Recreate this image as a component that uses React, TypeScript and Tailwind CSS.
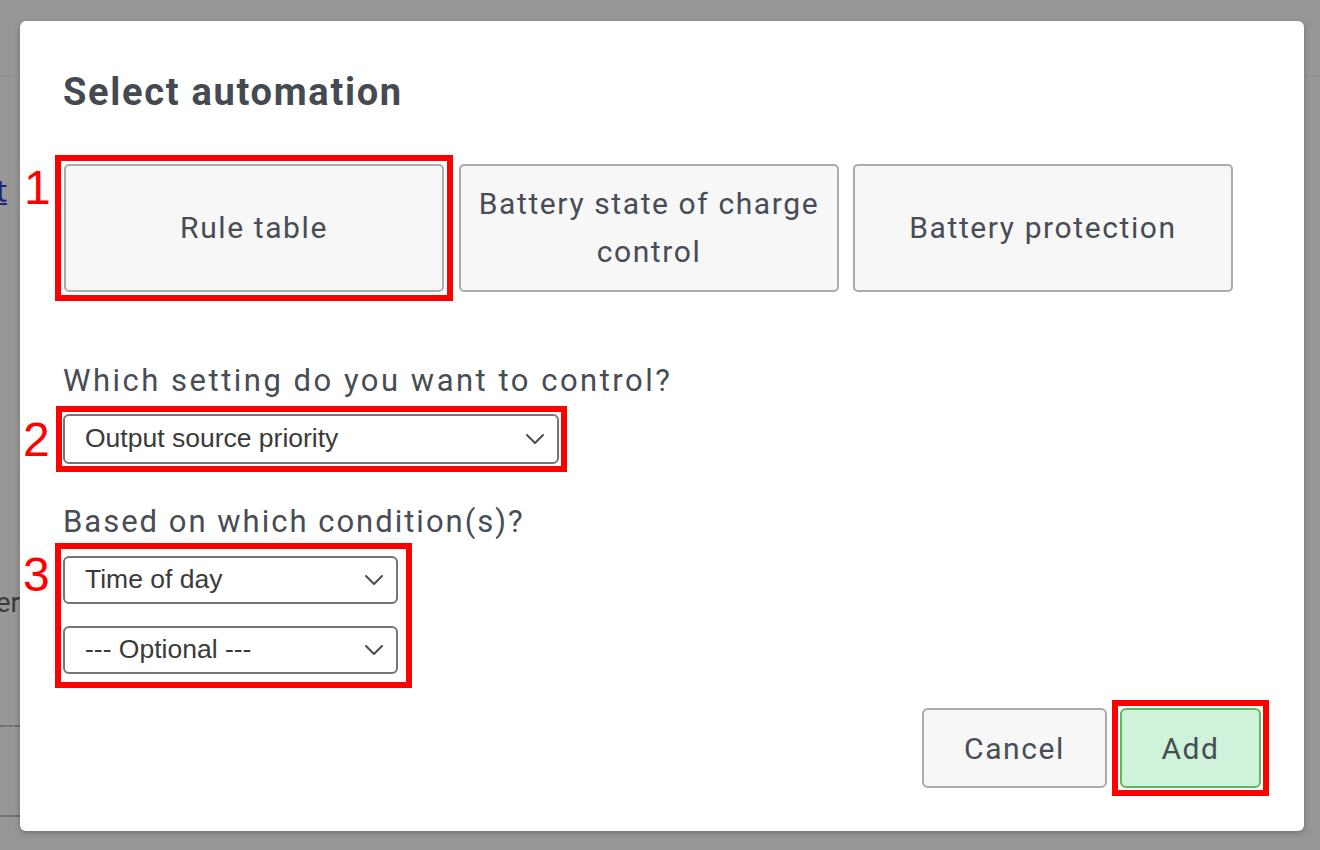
import React from "react";

const textFont = { fontFamily: "Roboto, 'Noto Sans', sans-serif" };

function Chevron() {
  return (
    <svg width="20" height="12" viewBox="0 0 20 12" fill="none" className="shrink-0">
      <path d="M2 2 L10 10 L18 2" stroke="#4a4d52" strokeWidth="2" strokeLinecap="round" strokeLinejoin="round" />
    </svg>
  );
}

function FakeSelect({ label, width, height }: { label: string; width: string; height: string }) {
  return (
    <div
      className={`flex items-center justify-between rounded-[6px] border-2 border-[#767676] bg-white pl-[20px] pr-[12px] text-[26.5px] text-[#3a3a3a] ${width} ${height}`}
      style={{ fontFamily: "'Liberation Sans', Arial, sans-serif" }}
    >
      <span>{label}</span>
      <Chevron />
    </div>
  );
}

function Marker({ n, className }: { n: string; className: string }) {
  return (
    <span
      className={`absolute text-[48px] leading-none text-[#ff0000] ${className}`}
      style={{ fontFamily: "'Liberation Sans', Arial, sans-serif" }}
    >
      {n}
    </span>
  );
}

const boxCls =
  "flex h-[128px] w-[380px] shrink-0 items-center justify-center rounded-[5px] border-2 border-[#ababab] bg-[#f7f7f7] px-[16px] text-center text-[30px] leading-[48px] tracking-[1.6px]";

export default function App() {
  return (
    <div className="relative h-[850px] w-[1320px] overflow-hidden bg-[#979797]">
      {/* page behind the overlay */}
      <div className="flex h-full flex-col">
        <div className="h-[76px] border-b border-[#8e8e8e]" />
        <div className="flex w-[20px] flex-col items-end overflow-hidden text-[#3a3a3a]">
          <span className="mr-[13px] mt-[100px] text-[30px] leading-[30px] text-[#20267a] underline decoration-2">t</span>
          <span className="mt-[382px] whitespace-nowrap text-[28px] leading-[30px]" style={textFont}>er</span>
          <div className="mt-[107px] w-full border-t-2 border-dashed border-[#6f6f6f]" />
          <div className="mt-[88px] w-full border-t-2 border-dashed border-[#6f6f6f]" />
        </div>
      </div>

      {/* dialog */}
      <div className="absolute inset-0 pl-[20px] pt-[21px]">
        <div
          className="flex h-[810px] w-[1284px] flex-col rounded-[6px] bg-white pl-[43px] pr-[35px] pt-[48px] text-[#474c55] shadow-[0_2px_6px_rgba(0,0,0,0.25)]"
          style={textFont}
        >
          <h1 className="text-[38px] font-bold leading-[46px] tracking-[1.7px] text-[#454a52]">Select automation</h1>

          <div className="-ml-[8px] mt-[40px] flex items-start">
            <div className="relative border-[6px] border-[#ff0000] p-[3px]">
              <Marker n="1" className="left-[-37px] top-[3px]" />
              <div className={boxCls}>Rule table</div>
            </div>
            <div className={`${boxCls} ml-[6px] mt-[9px]`}>Battery state of charge control</div>
            <div className={`${boxCls} ml-[14px] mt-[9px]`}>Battery protection</div>
          </div>

          <div className="mt-[62px] text-[31px] leading-[36px] tracking-[2.5px]">Which setting do you want to control?</div>

          <div className="relative -ml-[7px] mt-[7px] w-fit border-[6px] border-[#ff0000] p-[2px] pl-[1px]">
            <Marker n="2" className="left-[-39px] top-[4px]" />
            <FakeSelect label="Output source priority" width="w-[496px]" height="h-[50px]" />
          </div>

          <div className="mt-[32px] text-[31px] leading-[36px] tracking-[2px]">Based on which condition(s)?</div>

          <div className="relative -ml-[8px] mt-[3px] flex w-fit flex-col gap-[22px] border-[6px] border-[#ff0000] pb-[8px] pl-[2px] pr-[8px] pt-[7px]">
            <Marker n="3" className="left-[-38px] top-[2px]" />
            <FakeSelect label="Time of day" width="w-[335px]" height="h-[48px]" />
            <FakeSelect label="--- Optional ---" width="w-[335px]" height="h-[48px]" />
          </div>

          <div className="mt-[12px] flex items-center justify-end text-[30px] tracking-[1.6px]">
            <button className="h-[80px] w-[185px] rounded-[6px] border-2 border-[#ababab] bg-[#f7f7f7] text-[#474c55]">
              Cancel
            </button>
            <div className="ml-[5px] border-[6px] border-[#ff0000] p-[2px]">
              <button className="block h-[80px] w-[141px] rounded-[6px] border-2 border-[#5cb85c] bg-[#cff2da] text-[#474c55]">
                Add
              </button>
            </div>
          </div>
        </div>
      </div>
    </div>
  );
}
